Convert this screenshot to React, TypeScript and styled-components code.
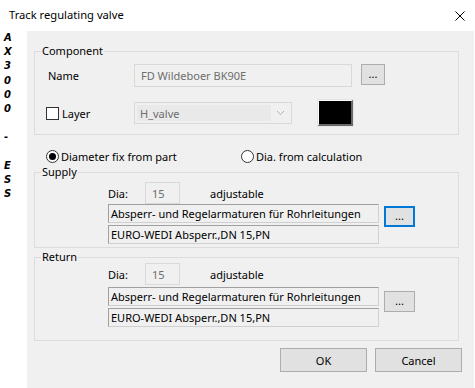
import React from "react";
import styled, { createGlobalStyle } from "styled-components";

const FONT = `"Noto Sans", "Segoe UI", sans-serif`;

const Global = createGlobalStyle`
  html, body { margin: 0; padding: 0; background: #fff; }
  body { font-family: ${FONT}; font-size: 11px; color: #000; }
  * { box-sizing: border-box; }
`;

const Window = styled.div`
  width: 475px;
  height: 388px;
  display: flex;
  flex-direction: column;
  background: #fff;
  overflow: hidden;
`;

const TitleBar = styled.div`
  flex: 0 0 31px;
  display: flex;
  align-items: center;
  justify-content: space-between;
  padding: 0 10px 0 9px;
`;

const Title = styled.span`
  font-size: 11.2px;
  line-height: 16px;
  margin-top: -1px;
`;

const Body = styled.div`
  flex: 1;
  display: flex;
`;

const SideStrip = styled.div`
  width: 27px;
  display: flex;
  flex-direction: column;
  padding-left: 4px;
  font-family: "DejaVu Sans", sans-serif;
  font-weight: bold;
  font-style: italic;
  font-size: 10px;
  line-height: 14.2px;
`;

const Panel = styled.div`
  flex: 1;
  margin-right: 1px;
  background: #f0f0f0;
  padding: 20px 12px 0 7px;
  display: flex;
  flex-direction: column;
`;

const Group = styled.div<{ $top: number; $pad: string }>`
  position: relative;
  width: 425px;
  margin-top: ${(p) => p.$top}px;
  border: 1px solid #dcdcdc;
  padding: ${(p) => p.$pad};
`;

const Legend = styled.span`
  position: absolute;
  top: -9px;
  left: 6px;
  padding: 0 1px;
  background: #f0f0f0;
  line-height: 16px;
`;

const Row = styled.div<{ $h: number; $mt?: number }>`
  display: flex;
  align-items: center;
  height: ${(p) => p.$h}px;
  margin-top: ${(p) => p.$mt ?? 0}px;
`;

const LabelCol = styled.div`
  width: 88px;
  display: flex;
  align-items: center;
`;

const NameLabel = styled.span`
  padding-left: 2px;
`;

const DisabledInput = styled.div<{ $w: number; $h: number }>`
  width: ${(p) => p.$w}px;
  height: ${(p) => p.$h}px;
  border: 1px solid #d9d9d9;
  background: #f0f0f0;
  color: #6d6d6d;
  padding-left: 6px;
  display: flex;
  align-items: center;
`;

const Select = styled.div`
  width: 158px;
  height: 22px;
  border: 1px solid #d9d9d9;
  background: #f0f0f0;
  display: flex;
  align-items: center;
  padding: 2px;
`;

const SelectText = styled.div`
  flex: 1;
  height: 100%;
  background: #e9e9e9;
  color: #6d6d6d;
  padding-left: 3px;
  display: flex;
  align-items: center;
`;

const Chevron = styled.svg`
  width: 18px;
  flex: 0 0 18px;
`;

const Swatch = styled.div`
  width: 35px;
  height: 26px;
  margin-left: 26px;
  background: #000;
  border-style: solid;
  border-width: 1px 2px 2px 1px;
  border-color: #ffffff #696969 #696969 #ffffff;
  box-shadow: 0 0 0 1px #e3e3e3;
`;

const SmallButton = styled.div<{ $w: number; $focus?: boolean; $ml: number; $mt?: number }>`
  width: ${(p) => p.$w}px;
  height: 21px;
  margin-left: ${(p) => p.$ml}px;
  margin-top: ${(p) => p.$mt ?? 0}px;
  background: #e1e1e1;
  border: ${(p) => (p.$focus ? "2px solid #0078d7" : "1px solid #adadad")};
  display: flex;
  align-items: center;
  justify-content: center;
  font-size: 11px;
  line-height: 1;
  padding-bottom: 2px;
`;

const CheckBox = styled.span`
  width: 13px;
  height: 13px;
  border: 1px solid #333;
  background: #fff;
  margin-right: 3px;
`;

const RadioRow = styled.div`
  display: flex;
  align-items: center;
  height: 16px;
  margin-top: 13px;
  padding-left: 12px;
`;

const RadioItem = styled.label<{ $w?: number }>`
  display: flex;
  align-items: center;
  width: ${(p) => (p.$w ? `${p.$w}px` : "auto")};
`;

const RadioCircle = styled.span<{ $on?: boolean }>`
  width: 13px;
  height: 13px;
  border-radius: 50%;
  border: 1px solid #333;
  background: #fff;
  margin-right: 2px;
  display: flex;
  align-items: center;
  justify-content: center;
  &::after {
    content: "";
    width: 7px;
    height: 7px;
    border-radius: 50%;
    background: ${(p) => (p.$on ? "#000" : "transparent")};
  }
`;

const DiaLabel = styled.span`
  width: 37px;
`;

const Adjustable = styled.span`
  margin-left: 30px;
`;

const FieldsRow = styled.div<{ $mt: number }>`
  display: flex;
  align-items: flex-start;
  margin-top: ${(p) => p.$mt}px;
`;

const FieldsCol = styled.div`
  display: flex;
  flex-direction: column;
  gap: 2px;
`;

const Field = styled.div`
  width: 271px;
  height: 19px;
  border-style: solid;
  border-width: 1px;
  border-color: #a0a0a0 #d0d0d0 #d0d0d0 #a0a0a0;
  background: #f0f0f0;
  padding-left: 2px;
  display: flex;
  align-items: center;
  white-space: nowrap;
  overflow: hidden;
`;

const ButtonRow = styled.div`
  display: flex;
  justify-content: flex-end;
  gap: 8px;
  margin-top: 7px;
`;

const PushButton = styled.button`
  width: 87px;
  height: 24px;
  background: #e1e1e1;
  border: 1px solid #adadad;
  font-family: ${FONT};
  font-size: 11px;
  color: #000;
  padding: 0;
`;

type PipeProps = {
  title: string;
  top: number;
  pad: string;
  diaTop: number;
  fieldsTop: number;
  btnTop: number;
  focus?: boolean;
};

const PipeGroup = ({ title, top, pad, diaTop, fieldsTop, btnTop, focus }: PipeProps) => (
  <Group $top={top} $pad={pad}>
    <Legend>{title}</Legend>
    <Row $h={22} $mt={diaTop}>
      <DiaLabel>Dia:</DiaLabel>
      <DisabledInput $w={35} $h={22}>15</DisabledInput>
      <Adjustable>adjustable</Adjustable>
    </Row>
    <FieldsRow $mt={fieldsTop}>
      <FieldsCol>
        <Field>Absperr- und Regelarmaturen für Rohrleitungen</Field>
        <Field>EURO-WEDI Absperr.,DN 15,PN</Field>
      </FieldsCol>
      <SmallButton $w={31} $ml={5} $mt={btnTop} $focus={focus}>...</SmallButton>
    </FieldsRow>
  </Group>
);

const sideLetters = ["A", "X", "3", "0", "0", "0", "\u00a0", "-", "\u00a0", "E", "S", "S"];

export default function App() {
  return (
    <>
      <Global />
      <Window>
        <TitleBar>
          <Title>Track regulating valve</Title>
          <svg width="10" height="10" viewBox="0 0 10 10">
            <path d="M0.5 0.5 L9.5 9.5 M9.5 0.5 L0.5 9.5" stroke="#000" strokeWidth="1" />
          </svg>
        </TitleBar>
        <Body>
          <SideStrip>
            {sideLetters.map((l, i) => (
              <span key={i}>{l}</span>
            ))}
          </SideStrip>
          <Panel>
            <Group $top={0} $pad="12px 0 8px 11px">
              <Legend>Component</Legend>
              <Row $h={23}>
                <LabelCol>
                  <NameLabel>Name</NameLabel>
                </LabelCol>
                <DisabledInput $w={218} $h={23}>FD Wildeboer BK90E</DisabledInput>
                <SmallButton $w={24} $ml={9} style={{ alignSelf: "flex-start" }}>...</SmallButton>
              </Row>
              <Row $h={26} $mt={13}>
                <LabelCol>
                  <CheckBox />
                  <span>Layer</span>
                </LabelCol>
                <Select>
                  <SelectText>H_valve</SelectText>
                  <Chevron viewBox="0 0 18 10" height="10">
                    <path d="M6 3 L9.5 6.5 L13 3" fill="none" stroke="#b0b0b0" strokeWidth="1" />
                  </Chevron>
                </Select>
                <Swatch />
              </Row>
            </Group>
            <RadioRow>
              <RadioItem $w={195}>
                <RadioCircle $on />
                <span>Diameter fix from part</span>
              </RadioItem>
              <RadioItem>
                <RadioCircle />
                <span>Dia. from calculation</span>
              </RadioItem>
            </RadioRow>
            <PipeGroup title="Supply" top={8} pad="0 0 3px 73px" diaTop={9} fieldsTop={0} btnTop={2} focus />
            <PipeGroup title="Return" top={9} pad="0 0 13px 73px" diaTop={5} fieldsTop={2} btnTop={4} />
            <ButtonRow>
              <PushButton>OK</PushButton>
              <PushButton>Cancel</PushButton>
            </ButtonRow>
          </Panel>
        </Body>
      </Window>
    </>
  );
}
